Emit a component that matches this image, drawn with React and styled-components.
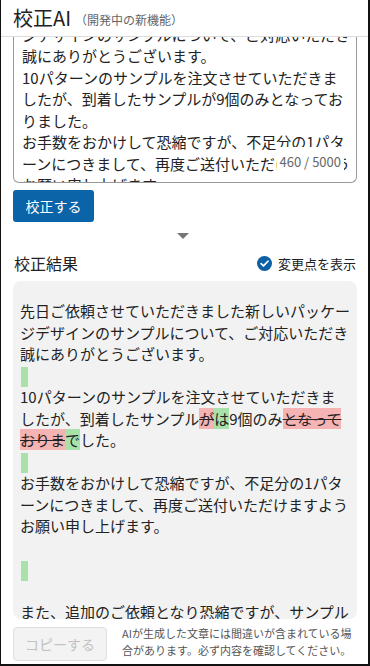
import React from "react";
import styled, { createGlobalStyle } from "styled-components";

const GlobalStyle = createGlobalStyle`
  html, body {
    margin: 0;
    padding: 0;
    background: #fff;
  }
  body {
    font-family: "Noto Sans CJK JP", "Noto Sans", sans-serif;
    color: #222;
  }
`;

const sourceLines = [
  "ジデザインのサンプルについて、ご対応いただき",
  "誠にありがとうございます。",
  "10パターンのサンプルを注文させていただきま",
  "したが、到着したサンプルが9個のみとなってお",
  "りました。",
  "お手数をおかけして恐縮ですが、不足分の1パタ",
  "ーンにつきまして、再度ご送付いただけますよう",
  "お願い申し上げます。",
];

const App = () => {
  return (
    <Frame>
      <GlobalStyle />
      <Header>
        <Title>校正AI</Title>
        <Sub>（開発中の新機能）</Sub>
      </Header>

      <Content>
        <InputBox>
          <InputText>
            {sourceLines.map((l, i) => (
              <Line key={i}>{l}</Line>
            ))}
          </InputText>
          <Counter>460 / 5000</Counter>
        </InputBox>

        <PrimaryButton>校正する</PrimaryButton>

        <ArrowRow>
          <Arrow />
        </ArrowRow>

        <ResultHeader>
          <SectionTitle>校正結果</SectionTitle>
          <Toggle>
            <svg width="15" height="15" viewBox="0 0 16 16">
              <circle cx="8" cy="8" r="8" fill="#0d5fa6" />
              <path
                d="M4.4 8.2l2.5 2.4 4.8-5"
                fill="none"
                stroke="#fff"
                strokeWidth="1.9"
                strokeLinecap="round"
                strokeLinejoin="round"
              />
            </svg>
            <span>変更点を表示</span>
          </Toggle>
        </ResultHeader>

        <ResultBox>
          <Line>先日ご依頼させていただきました新しいパッケー</Line>
          <Line>ジデザインのサンプルについて、ご対応いただき</Line>
          <Line>誠にありがとうございます。</Line>
          <Line>
            <Marker />
          </Line>
          <Line>10パターンのサンプルを注文させていただきま</Line>
          <Line>
            したが、到着したサンプル<Del>が</Del>
            <Ins>は</Ins>9個のみ<Del>となって</Del>
          </Line>
          <Line>
            <Del>おりま</Del>
            <Ins>で</Ins>した。
          </Line>
          <Line>
            <Marker />
          </Line>
          <Line>お手数をおかけして恐縮ですが、不足分の1パタ</Line>
          <Line>ーンにつきまして、再度ご送付いただけますよう</Line>
          <Line>お願い申し上げます。</Line>
          <Line />
          <Line>
            <Marker />
          </Line>
          <Line />
          <Line>また、追加のご依頼となり恐縮ですが、サンプル</Line>
          <Line>の色味について再度ご確認いただけますと幸いです。</Line>
        </ResultBox>
      </Content>

      <BottomBar>
        <CopyButton disabled>コピーする</CopyButton>
        <Notice>
          AIが生成した文章には間違いが含まれている場
          <br />
          合があります。必ず内容を確認してください。
        </Notice>
      </BottomBar>
    </Frame>
  );
};

export default App;

const Frame = styled.div`
  width: 370px;
  height: 666px;
  box-sizing: border-box;
  border-left: 1px solid #111;
  border-right: 2px solid #111;
  border-bottom: 2px solid #111;
  display: flex;
  flex-direction: column;
  overflow: hidden;
  background: #fff;
`;

const Header = styled.header`
  height: 37px;
  box-sizing: border-box;
  border-bottom: 1px solid #dcdcdc;
  padding: 0 12px;
  display: flex;
  align-items: center;
  gap: 4px;
  flex-shrink: 0;
`;

const Title = styled.span`
  font-size: 20px;
  color: #222;
  line-height: 1;
`;

const Sub = styled.span`
  font-size: 12px;
  color: #666;
  margin-top: 3px;
`;

const Content = styled.main`
  flex: 1;
  min-height: 0;
  padding: 0 11px 0 12px;
  display: flex;
  flex-direction: column;
`;

const InputBox = styled.div`
  position: relative;
  height: 146px;
  box-sizing: border-box;
  border: 1px solid #9a9a9a;
  border-top: none;
  border-radius: 0 0 6px 6px;
  overflow: hidden;
  flex-shrink: 0;
`;

const InputText = styled.div`
  margin-top: -13.5px;
  padding: 0 8px;
  font-size: 15px;
  line-height: 21.5px;
  color: #222;
`;

const Line = styled.div`
  height: 21.5px;
  white-space: nowrap;
`;

const Counter = styled.div`
  position: absolute;
  right: 12px;
  bottom: 5px;
  padding: 0 3px;
  line-height: 30px;
  font-size: 13px;
  color: #666;
  background: #fff;
`;

const PrimaryButton = styled.button`
  margin-top: 7px;
  width: 81px;
  height: 32px;
  border: none;
  border-radius: 3px;
  background: #0b63a8;
  color: #fff;
  font-family: inherit;
  font-size: 14px;
  padding: 0;
  cursor: pointer;
  flex-shrink: 0;
`;

const ArrowRow = styled.div`
  height: 28px;
  display: flex;
  align-items: center;
  justify-content: center;
  flex-shrink: 0;
`;

const Arrow = styled.span`
  width: 0;
  height: 0;
  border-left: 6px solid transparent;
  border-right: 6px solid transparent;
  border-top: 6px solid #777;
  margin-right: 4px;
`;

const ResultHeader = styled.div`
  height: 26px;
  display: flex;
  align-items: center;
  justify-content: space-between;
  flex-shrink: 0;
`;

const SectionTitle = styled.h2`
  margin: 0;
  font-size: 16px;
  font-weight: 400;
  color: #222;
  padding-left: 1px;
`;

const Toggle = styled.label`
  display: flex;
  align-items: center;
  gap: 6px;
  font-size: 13px;
  color: #222;
  padding-right: 1px;
`;

const ResultBox = styled.div`
  margin-top: 5px;
  height: 338px;
  box-sizing: border-box;
  background: #f2f2f2;
  border-radius: 8px;
  padding: 19px 7px 0;
  font-size: 15px;
  line-height: 21.5px;
  color: #222;
  overflow: hidden;
  flex-shrink: 0;
`;

const Del = styled.span`
  background: #f6b3b3;
  text-decoration: line-through;
`;

const Ins = styled.span`
  background: #a9e1ab;
`;

const Marker = styled.span`
  display: inline-block;
  width: 7px;
  height: 20px;
  vertical-align: middle;
  margin-left: 1px;
  background: #a9e1ab;
`;

const BottomBar = styled.footer`
  height: 45px;
  box-sizing: border-box;
  padding: 8px 11px 0 12px;
  display: flex;
  align-items: flex-start;
  gap: 15px;
  flex-shrink: 0;
`;

const CopyButton = styled.button`
  width: 94px;
  height: 34px;
  background: #f3f3f3;
  border: 1px solid #dedede;
  border-radius: 4px;
  color: #c2c2c2;
  font-family: inherit;
  font-size: 14px;
  padding: 0;
  flex-shrink: 0;
`;

const Notice = styled.p`
  margin: -2px 0 0;
  font-size: 11px;
  line-height: 17px;
  color: #555;
  white-space: nowrap;
`;
